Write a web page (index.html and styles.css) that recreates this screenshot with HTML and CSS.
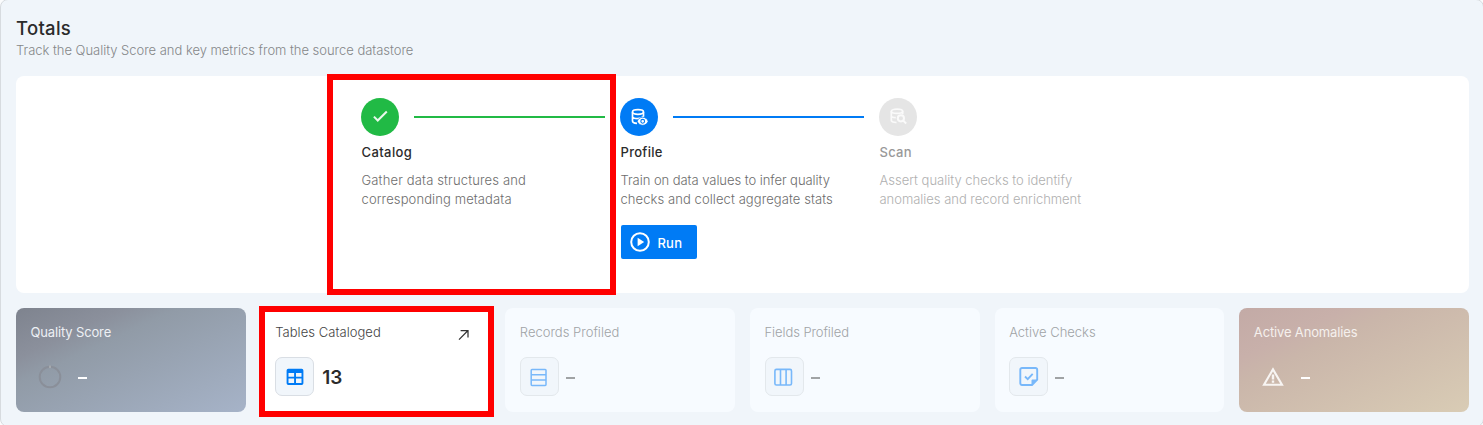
FILE: index.html
```html
<!DOCTYPE html>
<html lang="en">
<head>
<meta charset="utf-8">
<title>Totals</title>
<link rel="stylesheet" href="styles.css">
</head>
<body>
<section class="panel">
  <header class="heading">
    <h1 class="title">Totals</h1>
    <p class="subtitle">Track the Quality Score and key metrics from the source datastore</p>
  </header>

  <div class="steps">
    <article class="step">
      <div class="track">
        <span class="dot dot-green"><svg width="18" height="18" viewBox="0 0 24 24"><path fill="#e9f8ec" d="M9 16.170 4.830 12l-1.900 1.900L9 20 22 7l-1.900-1.900z" transform="translate(0 -1.500)"/></svg></span>
        <span class="line line-green"></span>
      </div>
      <h2 class="step-name s-catalog">Catalog</h2>
      <p class="desc d-catalog"><span class="d1">Gather data structures and</span><br><span class="d2">corresponding metadata</span></p>
      <span class="mark mark-step"></span>
    </article>
    <article class="step">
      <div class="track">
        <span class="dot dot-blue"><svg width="18" height="18" viewBox="0 0 18 18" fill="none" stroke="#fff" stroke-width="1.700"><ellipse cx="8" cy="4" rx="5.500" ry="2.300"/><path d="M2.500 4v9c0 1.300 2 2.200 4.500 2.400M13.500 4v4.500M2.500 8.500c0 1.400 2.400 2.200 5.500 2.200M13.500 8.200c-1 1.700-3 2.200-5.500 2.400"/><path fill="#fff" stroke="#007bf5" stroke-width=".8" d="M12.700 9.200c-2.500 0-4.600 1.600-5.500 4.100.9 2.500 3 4 5.500 4s4.600-1.500 5.500-4c-.9-2.500-3-4.100-5.500-4.100z"/><circle cx="12.700" cy="13.300" r="1.900" stroke="#007bf5" stroke-width="1.100" fill="#fff"/></svg></span>
        <span class="line line-blue"></span>
      </div>
      <h2 class="step-name s-profile">Profile</h2>
      <p class="desc d-profile"><span class="d1">Train on data values to infer quality</span><br><span class="d2">checks and collect aggregate stats</span></p>
      <button class="run"><svg width="20" height="20" viewBox="0 0 20 20"><circle cx="10" cy="10" r="8.800" fill="none" stroke="#fff" stroke-width="2"/><path fill="#fff" d="M7.600 5.700v8.600l6.600-4.300z"/></svg><span class="run-label">Run</span></button>
    </article>
    <article class="step step-off">
      <div class="track">
        <span class="dot dot-grey"><svg width="18" height="18" viewBox="0 0 18 18" fill="none" stroke="#fafafa" stroke-width="1.700"><ellipse cx="8" cy="3.300" rx="5.700" ry="2.100"/><path d="M2.300 3.300v9c0 1.300 2.300 2.100 5.200 2.200M13.700 3.300v3M2.300 7.700c0 1.200 2 1.900 4.500 2"/><circle cx="11.900" cy="10.300" r="3.100" stroke-width="2"/><path d="m14.200 12.600 3 2.900" stroke-width="2"/></svg></span>
      </div>
      <h2 class="step-name s-scan">Scan</h2>
      <p class="desc d-scan"><span class="d1">Assert quality checks to identify</span><br><span class="d2">anomalies and record enrichment</span></p>
    </article>
  </div>

  <div class="cards">
    <article class="card card-score">
      <h3 class="label l-score">Quality Score</h3>
      <div class="metric"><span class="bare"><svg width="24" height="24" viewBox="0 0 24 24" fill="none"><circle cx="12" cy="12" r="10.300" stroke="#8a8f99" stroke-width="2"/><path d="M12 .6v2.300" stroke="#a5a9ae" stroke-width="2"/></svg></span><span class="dash"></span></div>
    </article>
    <article class="card card-active">
      <h3 class="label l-tables">Tables Cataloged</h3>
      <svg class="arrow" width="12" height="12" viewBox="0 0 12 12" fill="none" stroke="#333" stroke-width="1.250"><path d="M1 10.600 10 1.500M2.600 1.500H10V8.500"/></svg>
      <div class="metric"><span class="tile"><svg width="20" height="20" viewBox="0 0 20 20"><path fill="#007bf5" fill-rule="evenodd" d="M3.300 1.800h13.400a1.700 1.700 0 0 1 1.700 1.700v12.800a1.700 1.700 0 0 1-1.700 1.700H3.300a1.700 1.700 0 0 1-1.700-1.700V3.500a1.700 1.700 0 0 1 1.700-1.700zM3.500 6v3.700h5.600V6zM11 6v3.700h5.500V6zM3.500 11.600v4.500h5.600v-4.500zM11 11.600v4.500h5.500v-4.500z"/></svg></span><span class="value">13</span></div>
      <span class="mark mark-card"></span>
    </article>
    <article class="card card-off">
      <h3 class="label l-records">Records Profiled</h3>
      <div class="metric"><span class="tile"><svg width="20" height="20" viewBox="0 0 20 20" fill="none" stroke="#78b8fa" stroke-width="1.500"><rect x="2.200" y="2.400" width="14.800" height="16" rx=".8"/><path d="M2.200 7.700H17M2.200 13.100H17"/></svg></span><span class="dash"></span></div>
    </article>
    <article class="card card-off">
      <h3 class="label l-fields">Fields Profiled</h3>
      <div class="metric"><span class="tile"><svg width="20" height="20" viewBox="0 0 20 20" fill="none" stroke="#78b8fa" stroke-width="1.600"><rect x=".9" y="2.400" width="16.600" height="15.600" rx="1.500"/><path d="M6.500 2.400V18M12.100 2.400V18"/></svg></span><span class="dash"></span></div>
    </article>
    <article class="card card-off">
      <h3 class="label l-checks">Active Checks</h3>
      <div class="metric"><span class="tile"><svg width="20" height="20" viewBox="0 0 20 20" fill="none" stroke="#78b8fa" stroke-width="1.900"><path d="M3 1h13.500a1.700 1.700 0 0 1 1.700 1.700v10L13 18H3a1.700 1.700 0 0 1-1.700-1.700V2.700A1.700 1.700 0 0 1 3 1z"/><path fill="#78b8fa" stroke="none" d="M12.500 18.500v-4.700c0-.8.500-1.300 1.300-1.300h4.900z"/><path d="m6 9.500 2.700 2.600 5-5.200"/></svg></span><span class="dash"></span></div>
    </article>
    <article class="card card-anomaly">
      <h3 class="label l-anomalies">Active Anomalies</h3>
      <div class="metric"><span class="bare"><svg width="24" height="22" viewBox="0 0 24 22"><path fill="#f8f5f3" fill-rule="evenodd" d="M12 1.200 22.800 19.700H1.200zM12 5.400 4.800 17.700h14.400z"/><path fill="#f8f5f3" d="M10.800 8.500h2.400v5h-2.400zM10.800 14.600h2.400v2.200h-2.400z"/></svg></span><span class="dash"></span></div>
    </article>
  </div>
</section>
</body>
</html>
```
FILE: styles.css
```css
* { box-sizing: border-box; }
html, body { height: 100%; overflow: hidden; }
body { margin: 0; background: #fbfcfd; font-family: Inter, "Noto Sans", sans-serif; color: #2b2b2b; }
h1, h2, h3, p { margin: 0; }
svg { display: block; flex: none; }

.panel { width: 1484px; height: 428px; margin-top: -1px; padding: 16px 14px 0 15px; border: 1px solid #d7dbdf; border-radius: 8px; background: #f0f5fa; }
.heading { height: 60px; }
.title { font-size: 18.5px; line-height: 24px; font-weight: 500; letter-spacing: .3px; white-space: nowrap; }
.subtitle { font-size: 13px; line-height: 20px; font-weight: 300; letter-spacing: -.03px; color: #858789; white-space: nowrap; }

.steps { display: flex; justify-content: center; gap: 15px; height: 217px; padding: 22px 1px 0 0; background: #fff; border-radius: 8px; }
.step { position: relative; width: 244px; }
.track { display: flex; align-items: center; gap: 15px; height: 38px; }
.dot { display: flex; align-items: center; justify-content: center; width: 38px; height: 38px; border-radius: 50%; }
.dot-green { background: #21ba45; }
.dot-blue { background: #007bf5; }
.dot-grey { background: #e5e5e5; }
.line { flex: 1; height: 2px; }
.line-green { background: #21ba45; }
.line-blue { background: #007bf5; }
.step-name { margin-top: 6px; padding-left: .5px; font-size: 13px; line-height: 20px; font-weight: 500; white-space: nowrap; }
.desc { margin-top: 9px; padding-left: .5px; font-size: 13px; line-height: 19px; font-weight: 300; color: #6d6d6d; white-space: nowrap; }
.step-off .step-name { color: #999; }
.step-off .desc { color: #b0b0b0; }
.run { display: flex; align-items: center; gap: 8px; width: 76px; height: 34px; margin-top: 16px; margin-left: .5px; padding: 0 0 0 9px; border: 0; border-radius: 2px; background: #007bf5; color: #fff; font: 500 13px/20px Inter, sans-serif; }
.run-label { padding-top: 1px; letter-spacing: .2px; }

.s-catalog { letter-spacing: .4px; }
.s-profile { letter-spacing: .3px; }
.s-scan { letter-spacing: .25px; }
.d-catalog .d1 { letter-spacing: .15px; }
.d-catalog .d2 { letter-spacing: .11px; }
.d-profile .d1 { letter-spacing: -.05px; }
.d-profile .d2 { letter-spacing: .08px; }
.d-scan .d2 { letter-spacing: -.03px; }

.cards { display: grid; grid-template-columns: repeat(6, 1fr); gap: 15px; margin-top: 15px; }
.card { position: relative; height: 104px; padding: 14px 14.500px 0; border-radius: 8px; background: #fff; }
.card-off { background: #f7fbff; }
.card-score { background: linear-gradient(155deg, #7e838e 0%, #8b909c 24%, #919ba7 36%, #a6b3c8 100%); color: #edf0f4; }
.card-anomaly { background: linear-gradient(155deg, #c3aaa6 0%, #c8b0aa 24%, #cab6aa 36%, #d9ccb5 100%); color: #f5f0ed; }
.label { font-size: 13px; line-height: 20px; font-weight: 300; white-space: nowrap; }
.card-active .label { color: #444; }
.card-off .label { color: #a0a3a6; }
.card-score .label, .card-anomaly .label { font-weight: 400; }
.l-score, .l-anomalies { letter-spacing: -.15px; }
.l-tables { letter-spacing: .05px; }
.l-fields { letter-spacing: -.08px; }
.metric { display: flex; align-items: center; height: 40px; margin-top: 15px; }
.tile { display: flex; align-items: center; justify-content: center; width: 39px; height: 39px; margin-bottom: 1px; border: 1px solid #d9dee4; border-radius: 7px; background: #f1f6fb; }
.card-off .tile { border-color: #e3e8ec; }
.bare { display: flex; align-items: center; justify-content: center; width: 39px; height: 39px; }
.value { margin: 2px 0 0 8px; font-size: 19px; line-height: 24px; font-weight: 600; }
.dash { width: 9px; height: 2px; margin: 1px 0 0 8px; background: #a0a3a5; }
.card-off .dash { margin-left: 7px; }
.card-score .dash, .card-anomaly .dash { background: #fff; }
.arrow { position: absolute; top: 21px; right: 20.700px; }

.mark { position: absolute; border: 6px solid #f00; pointer-events: none; z-index: 2; }
.mark-step { left: -34px; top: -24.500px; width: 289px; height: 221px; }
.mark-card { left: -1.500px; top: -2.500px; width: 235px; height: 111px; }
```
